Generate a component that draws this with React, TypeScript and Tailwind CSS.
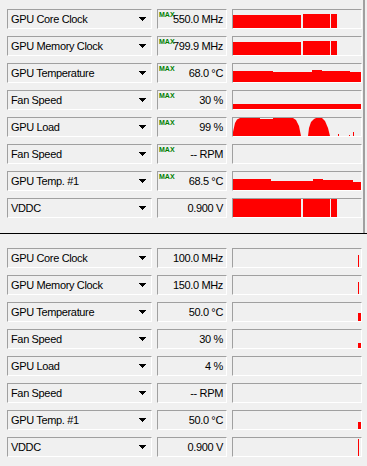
import React from "react";

type Graph = React.ReactNode;

const RED = "#ff0000";

function Bars({ top }: { top: number }) {
  return (
    <g shapeRendering="crispEdges" fill={RED}>
      <rect x={0} y={top} width={68} height={18 - top} />
      <rect x={70} y={Math.max(top - 1, 0)} width={27} height={18 - Math.max(top - 1, 0)} />
      <rect x={98} y={Math.max(top - 1, 0)} width={6} height={18 - Math.max(top - 1, 0)} />
    </g>
  );
}

function Steps({ pts }: { pts: [number, number, number][] }) {
  return (
    <g shapeRendering="crispEdges" fill={RED}>
      {pts.map(([x0, x1, y], i) => (
        <rect key={i} x={x0} y={y} width={x1 - x0} height={18 - y} />
      ))}
    </g>
  );
}

const topRows: { label: string; value: string; graph: Graph }[] = [
  { label: "GPU Core Clock", value: "550.0 MHz", graph: <Bars top={5} /> },
  { label: "GPU Memory Clock", value: "799.9 MHz", graph: <Bars top={5} /> },
  {
    label: "GPU Temperature",
    value: "68.0 °C",
    graph: (
      <Steps
        pts={[
          [0, 40, 7],
          [40, 79, 8],
          [79, 89, 6],
          [89, 117, 7],
          [117, 128, 8],
        ]}
      />
    ),
  },
  {
    label: "Fan Speed",
    value: "30 %",
    graph: <Steps pts={[[0, 128, 13]]} />,
  },
  {
    label: "GPU Load",
    value: "99 %",
    graph: (
      <g fill={RED}>
        <polygon points="0,18 0,14 2,5 4,1.5 7,0 27,0 27,1 40,1 40,0 60,0 63,2 66,8 68,18" />
        <polygon points="75,18 76,10 78,4 81,1 83,0 89,0 92,3 95,10 97,18" />
        <g shapeRendering="crispEdges">
          <rect x={105} y={16} width={1} height={2} />
          <rect x={116} y={17} width={1} height={1} />
          <rect x={120} y={14} width={1} height={4} />
        </g>
      </g>
    ),
  },
  { label: "Fan Speed", value: "-- RPM", graph: null },
  {
    label: "GPU Temp. #1",
    value: "68.5 °C",
    graph: (
      <Steps
        pts={[
          [0, 38, 7],
          [38, 80, 9],
          [80, 90, 7],
          [90, 120, 8],
          [120, 128, 10],
        ]}
      />
    ),
  },
  { label: "VDDC", value: "0.900 V", graph: <Bars top={0} /> },
];

const line = (y: number) => (
  <rect x={125} y={y} width={1} height={18 - y} fill={RED} shapeRendering="crispEdges" />
);
const block = (y: number) => (
  <rect x={125} y={y} width={3} height={18 - y} fill={RED} shapeRendering="crispEdges" />
);

const bottomRows: { label: string; value: string; graph: Graph }[] = [
  { label: "GPU Core Clock", value: "100.0 MHz", graph: line(6) },
  { label: "GPU Memory Clock", value: "150.0 MHz", graph: line(6) },
  { label: "GPU Temperature", value: "50.0 °C", graph: block(10) },
  { label: "Fan Speed", value: "30 %", graph: block(13) },
  { label: "GPU Load", value: "4 %", graph: null },
  { label: "Fan Speed", value: "-- RPM", graph: null },
  { label: "GPU Temp. #1", value: "50.0 °C", graph: block(11) },
  { label: "VDDC", value: "0.900 V", graph: line(1) },
];

const box =
  "h-5 border-t border-l border-t-[#a0a0a0] border-l-[#a0a0a0] border-b border-r border-b-white border-r-white bg-[#f0f0f0]";

function Arrow() {
  return (
    <svg width="7" height="4" viewBox="0 0 7 4" shapeRendering="crispEdges" className="block">
      <rect x="0" y="0" width="7" height="1" fill="#000" />
      <rect x="1" y="1" width="5" height="1" fill="#000" />
      <rect x="2" y="2" width="3" height="1" fill="#000" />
      <rect x="3" y="3" width="1" height="1" fill="#000" />
    </svg>
  );
}

function Row({
  label,
  value,
  graph,
  max,
}: {
  label: string;
  value: string;
  graph: Graph;
  max: boolean;
}) {
  return (
    <div className="flex gap-[5px]">
      <div className={`${box} w-[145px] flex items-center justify-between pl-[3px] pr-[5px]`}>
        <span className="leading-none">{label}</span>
        <Arrow />
      </div>
      <div className={`${box} relative w-[70px] flex items-center justify-end pr-[3px]`}>
        {max && (
          <span
            className="absolute left-[1px] top-[1px] text-[7px] font-bold leading-none text-[#008000] tracking-[0px]"
          >
            MAX
          </span>
        )}
        <span className="relative leading-none">{value}</span>
      </div>
      <div className={`${box} w-[130px]`}>
        <svg width="128" height="18" viewBox="0 0 128 18" className="block">
          {graph}
        </svg>
      </div>
    </div>
  );
}

export default function App() {
  return (
    <div
      className="w-[367px] h-[466px] bg-[#f0f0f0] text-black text-[11px] tracking-[-0.35px] overflow-hidden"
      style={{ fontFamily: '"Liberation Sans", Arial, sans-serif' }}
    >
      <div className="border-b border-black">
        <div className="h-[233px] w-[365px] border-r-2 border-[#a0a0a0] pl-[7px] pt-[9px] flex flex-col gap-[7px]">
          {topRows.map((r, i) => (
            <Row key={i} {...r} max={i !== 7} />
          ))}
        </div>
      </div>
      <div className="pl-[7px] pt-[14px] flex flex-col gap-[7px]">
        {bottomRows.map((r, i) => (
          <Row key={i} {...r} max={false} />
        ))}
      </div>
    </div>
  );
}
